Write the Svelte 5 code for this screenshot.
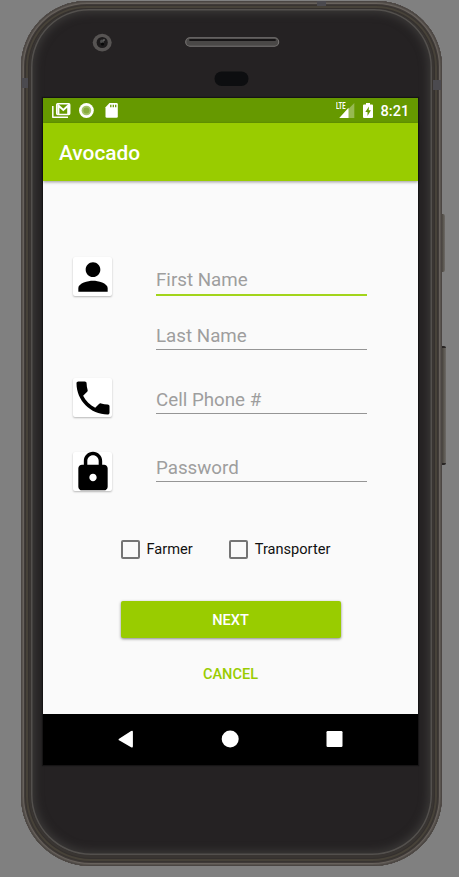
<script>
  const fields = [
    { label: 'First Name', icon: 'person', kind: 'first' },
    { label: 'Last Name', icon: null, kind: 'last' },
    { label: 'Cell Phone #', icon: 'phone', kind: 'cell' },
    { label: 'Password', icon: 'lock', kind: 'password' }
  ];
  const paths = {
    person: 'M12 12c2.21 0 4-1.79 4-4s-1.79-4-4-4-4 1.79-4 4 1.79 4 4 4zm0 2c-2.67 0-8 1.34-8 4v2h16v-2c0-2.66-5.33-4-8-4z',
    phone: 'M6.62 10.79c1.44 2.83 3.76 5.14 6.59 6.59l2.2-2.2c.27-.27.67-.36 1.02-.24 1.12.37 2.33.57 3.57.57.55 0 1 .45 1 1V20c0 .55-.45 1-1 1-9.39 0-17-7.61-17-17 0-.55.45-1 1-1h3.5c.55 0 1 .45 1 1 0 1.25.2 2.45.57 3.57.11.35.03.74-.25 1.02l-2.2 2.2z',
    lock: 'M18 8h-1V6c0-2.76-2.24-5-5-5S7 3.24 7 6v2H6c-1.1 0-2 .9-2 2v10c0 1.1.9 2 2 2h12c1.1 0 2-.9 2-2V10c0-1.1-.9-2-2-2zm-6 9c-1.1 0-2-.9-2-2s.9-2 2-2 2 .9 2 2-.9 2-2 2zm3.1-9H8.9V6c0-1.71 1.39-3.1 3.1-3.1 1.71 0 3.1 1.39 3.1 3.1v2z'
  };
</script>

<div class="stage">
  <span class="side power"></span>
  <span class="side volume"></span>
  <div class="phone">
    <span class="band top"></span>
    <span class="band left"></span>
    <span class="band right"></span>
    <div class="face">
      <div class="bezel">
        <svg class="hardware" width="376" height="89" viewBox="0 0 376 89">
          <ellipse cx="59.2" cy="33.6" rx="9.5" ry="8.8" fill="#575453" />
          <circle cx="59.2" cy="33.5" r="5.6" fill="#1d1b1c" />
          <circle cx="59" cy="32.5" r="2" fill="#4a4a4a" />
          <circle cx="59.5" cy="35" r="1.6" fill="#080808" />
          <circle cx="61" cy="31" r=".8" fill="#888" />
          <rect x="142.7" y="28.8" width="93" height="8.4" rx="4.2" fill="#4a4847" stroke="#777473" stroke-width="1.1" />
          <path d="M147 31h85" stroke="#171516" stroke-width="1.8" stroke-linecap="round" />
          <rect x="171.5" y="62.5" width="34" height="14.5" rx="7.2" fill="#0d0e10" />
        </svg>
      </div>
      <main class="screen">
        <div class="status">
          <svg class="note" width="70" height="25" viewBox="0 0 70 25">
            <path d="M.8 8V19.3h15.2" fill="none" stroke="#fff" stroke-width="1.5" stroke-linejoin="round" />
            <rect x="4.7" y="5.8" width="13" height="10.6" rx="1" fill="none" stroke="#fff" stroke-width="1.5" />
            <path d="M6.4 16V7.5l4.9 4.4 4.900-4.400V16" fill="none" stroke="#fff" stroke-width="2" />
            <circle cx="34.4" cy="12.5" r="7.4" fill="#fff" />
            <circle cx="34.4" cy="12.5" r="4.8" fill="#a5c26b" />
            <circle cx="34.4" cy="12.5" r="3" fill="#87ad3d" />
            <path d="M57.5 5h7q1.3 0 1.3 1.3v12.2q0 1.3-1.3 1.3h-9.7q-1.3 0-1.3-1.3V9.3z" fill="#fff" />
            <path d="M58.8 6.8v2.4M61.3 6.8v2.4M63.7 6.8v2.4" stroke="#669900" stroke-width="1.3" />
          </svg>
          <div class="signal">
            <span class="lte">LTE</span>
            <svg width="22" height="25" viewBox="0 0 22 25">
              <path d="M19.3 5v15H4.3z" fill="#fff" opacity=".32" />
              <path d="M13.5 9.8V20H4.3z" fill="#fff" />
            </svg>
          </div>
          <svg class="battery" width="10" height="25" viewBox="0 0 10 25">
            <path d="M3 5h4v1.6h2q1 0 1 1v11.3q0 1-1 1H1q-1 0-1-1V7.6q0-1 1-1h2z" fill="#fff" />
            <path d="M6 8.5L2.300 14H4.500v4L7.900 12.300H5.700z" fill="#669900" />
          </svg>
          <span class="time">8:21</span>
        </div>
        <header>Avocado</header>
        <form>
          {#each fields as field}
            <div class="row {field.kind}">
              <div class="slot">
                {#if field.icon}
                  <div class="card">
                    <svg width="44" height="44" viewBox="0 0 24 24"><path d={paths[field.icon]} /></svg>
                  </div>
                {/if}
              </div>
              <label>{field.label}</label>
            </div>
          {/each}
          <div class="checks">
            <span class="check"><i></i>Farmer</span>
            <span class="check"><i></i>Transporter</span>
          </div>
          <div class="next">NEXT</div>
          <div class="cancel">CANCEL</div>
        </form>
        <nav>
          <svg width="375" height="51" viewBox="0 0 375 51" fill="#fff">
            <path d="M76.500 24.400Q74.600 25.500 76.500 26.600L88.100 33.300Q89.900 34.200 89.900 32.300V17.900Q89.900 16.100 88.100 17.100z" />
            <circle cx="187.2" cy="25" r="8.5" />
            <rect x="283.5" y="17" width="16" height="16" rx="1.2" />
          </svg>
        </nav>
      </main>
    </div>
  </div>
</div>

<style>
  :global(body) { margin: 0; background: #808080; }
  .stage {
    position: relative;
    box-sizing: border-box;
    width: 459px;
    height: 877px;
    padding: 1px 0 0 21px;
    overflow: hidden;
    background: #808080;
    font-family: Roboto, sans-serif;
  }
  .side { position: absolute; left: 440px; box-sizing: border-box; background: linear-gradient(90deg, #302e2b, #57534c 60%, #6d6a66); border-radius: 0 2px 2px 0; }
  .power { top: 214px; height: 58px; width: 5px; }
  .volume { top: 346px; height: 119px; width: 6px; border-top: 2px solid #292624; border-bottom: 2px solid #292624; }
  .phone {
    position: relative;
    box-sizing: border-box;
    width: 421px;
    height: 865px;
    padding: 8px 10px 11px;
    border-radius: 66px 66px 70px 70px;
    background: #393532;
    box-shadow: inset 0 0 0 1px #4b4643, inset 0 0 0 2px #59544f, inset 0 0 0 3px #68625d,
      inset 0 0 0 4px #403b38, inset 0 0 0 5px #383431, inset 0 0 0 7px #474239, inset 0 0 0 8px #34302e;
  }
  .band { position: absolute; background: #4b4a4f; }
  .band.top { left: 296px; top: 0; width: 9px; height: 5px; }
  .band.left { left: 1px; top: 77px; width: 6px; height: 10px; }
  .band.right { right: 1px; top: 79px; width: 8px; height: 10px; }
  .face {
    box-sizing: border-box;
    width: 401px;
    height: 846px;
    padding: 0 0 0 11.5px;
    border-radius: 58px 58px 60px 60px;
    background: #252223;
    box-shadow: inset 0 0 0 1.5px #53504d, inset 0 0 8px 4px #3b3938;
  }
  .bezel { height: 89px; }
  .hardware { display: block; }
  .screen {
    width: 375.5px;
    height: 667px;
    display: flex;
    flex-direction: column;
    background: #fafafa;
    box-shadow: 0 0 1px 1px #161415;
  }
  .status { height: 25px; flex: none; display: flex; align-items: center; background: #669900; color: #fff; }
  .note { margin-left: 9px; margin-right: auto; }
  .signal { position: relative; width: 22px; height: 25px; margin-right: 6.5px; }
  .signal svg { display: block; }
  .lte { position: absolute; left: 1px; top: 4px; font: 700 9px/9px Roboto, sans-serif; transform: scaleX(.66); transform-origin: left; }
  .time { width: 29px; margin-left: 7.5px; margin-right: 8.5px; font-size: 14.6px; font-weight: 500; line-height: 26px; white-space: nowrap; }
  header {
    position: relative;
    flex: none;
    height: 58px;
    padding-left: 16.5px;
    background: #99cc00;
    color: #fff;
    font-size: 20.9px;
    font-weight: 500;
    line-height: 60px;
    box-sizing: border-box;
    box-shadow: 0 1px 3px #0006;
  }
  form { height: 533px; flex: none; box-sizing: border-box; padding: 76px 30.5px 0; display: flex; flex-direction: column; }
  .row { display: flex; align-items: flex-start; flex: none; }
  .slot { width: 83px; flex: none; }
  .card {
    width: 39px;
    height: 39px;
    display: flex;
    align-items: center;
    justify-content: center;
    background: #fff;
    border-radius: 2px;
    box-shadow: 0 1px 2px #0004;
  }
  .card svg { flex: none; }
  label {
    box-sizing: border-box;
    width: 211px;
    font-size: 18.75px;
    line-height: 22px;
    color: #9e9e9e;
    border-bottom: 1px solid #959595;
  }
  .first { height: 55px; }
  .first label { height: 39px; padding-top: 12px; border-bottom: 2px solid #a2d41b; }
  .last { height: 66px; }
  .last label { height: 38px; padding-top: 13px; }
  .cell { height: 74px; }
  .cell label { height: 36px; padding-top: 11px; }
  .password { height: 87px; }
  .password label { height: 30px; padding-top: 5px; }
  .checks { display: flex; flex: none; gap: 36px; padding-left: 47.5px; height: 20px; font-size: 14.6px; color: #111; }
  .check { display: flex; align-items: center; gap: 7px; }
  .check i { box-sizing: border-box; width: 19px; height: 19px; border: 2px solid #757575; border-radius: 2px; }
  .next {
    flex: none;
    width: 220px;
    height: 37px;
    margin: 42px 0 0 47.5px;
    background: #99cc00;
    border-radius: 2px;
    box-shadow: 0 1px 3px #0007;
    color: #fff;
    text-align: center;
    font-size: 14.6px;
    font-weight: 500;
    line-height: 38px;
  }
  .cancel { width: 220px; margin: 26px 0 0 47.5px; color: #99cc00; text-align: center; font-size: 14.6px; font-weight: 500; line-height: 20px; }
  nav { flex: none; height: 51px; background: #000; }
  nav svg { display: block; }
</style>
